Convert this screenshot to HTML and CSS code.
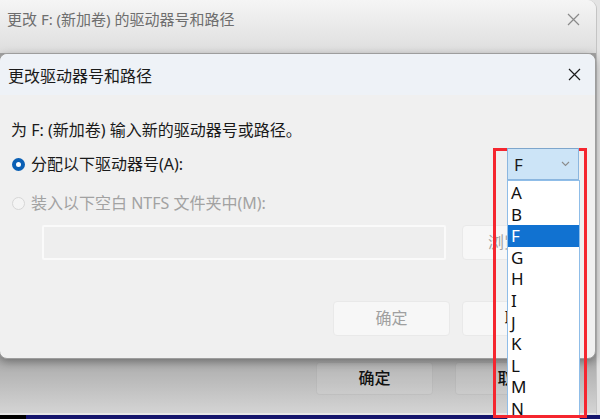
FILE: index.html
```html
<!DOCTYPE html>
<html lang="zh-CN">
  <head>
    <meta charset="UTF-8" />
    <meta name="viewport" content="width=device-width, initial-scale=1.0" />
    <title>更改驱动器号和路径</title>
    <link rel="stylesheet" href="styles.css">
  </head>
  <body>
    <div class="desk">
      <!-- window behind -->
      <div class="back-window">
        <div class="back-title">
          <span>更改 F: (新加卷) 的驱动器号和路径</span>
          <svg class="close-icon" width="13" height="13" viewBox="0 0 13 13">
            <path d="M1 1L12 12M12 1L1 12" stroke="#8a8a8a" stroke-width="1.2" fill="none" />
          </svg>
        </div>
        <div class="back-body">
          <div class="back-btn">确定</div>
          <div class="back-btn">取消</div>
        </div>
      </div>

      <!-- front dialog -->
      <div class="dialog">
        <div class="dialog-title">
          <span>更改驱动器号和路径</span>
          <svg class="close-icon" width="13" height="13" viewBox="0 0 13 13">
            <path d="M1 1L12 12M12 1L1 12" stroke="#1c1c1c" stroke-width="1.2" fill="none" />
          </svg>
        </div>
        <div class="dialog-body">
          <div class="prompt">为 F: (新加卷) 输入新的驱动器号或路径。</div>

          <div class="row row-letter">
            <label class="option">
              <span class="radio checked"></span>
              分配以下驱动器号(A):
            </label>
            <div class="combo">
              <div class="combo-face">
                <span>F</span>
                <svg width="9" height="6" viewBox="0 0 9 6">
                  <path d="M1 1L4.5 4.5L8 1" stroke="#8c8c8c" stroke-width="1.1" fill="none" />
                </svg>
              </div>
              <ul class="combo-list">
                <li>A</li>
                <li>B</li>
                <li class="selected">F</li>
                <li>G</li>
                <li>H</li>
                <li>I</li>
                <li>J</li>
                <li>K</li>
                <li>L</li>
                <li>M</li>
                <li>N</li>
              </ul>
              <div class="mark"></div>
            </div>
          </div>

          <div class="row row-folder">
            <label class="option disabled">
              <span class="radio"></span>
              装入以下空白 NTFS 文件夹中(M):
            </label>
          </div>

          <div class="row row-path">
            <div class="path-box"></div>
            <div class="btn muted">浏览(B)...</div>
          </div>

          <div class="row row-actions">
            <div class="btn muted">确定</div>
            <div class="btn">取消</div>
          </div>
        </div>
      </div>
    </div>
  </body>
</html>
```

FILE: styles.css
```css
* {
  box-sizing: border-box;
}
body {
  margin: 0;
  font-family: "Noto Sans", "Noto Sans CJK SC", sans-serif;
  color: #1a1a1a;
}
.desk {
  position: relative;
  width: 600px;
  height: 419px;
  overflow: hidden;
  background: linear-gradient(to bottom, #e4e4e4 415px, transparent 415px),
    linear-gradient(to right, #000 26px, #15156c 26px);
}

/* window behind */
.back-window {
  position: absolute;
  left: -3px;
  top: 0;
  width: 600px;
  height: 415px;
  display: flex;
  flex-direction: column;
  border-radius: 0 9px 0 0;
  border-right: 1px solid #c4c4c4;
  border-bottom: 2px solid #e6e6e6;
  overflow: hidden;
}
.back-title {
  height: 53px;
  padding: 8px 16px 0 10px;
  display: flex;
  justify-content: space-between;
  align-items: flex-start;
  background: linear-gradient(#f5f5f5, #dedede);
  color: #6e6e6e;
  font-size: 15px;
  line-height: 22px;
}
.back-title .close-icon {
  margin-top: 5px;
}
.back-body {
  flex: 1;
  display: flex;
  justify-content: flex-end;
  align-items: flex-end;
  gap: 22px;
  padding: 0 24px 18px 0;
  background: linear-gradient(#a6a6a6 300px, #d4d4d4);
}
.back-btn {
  width: 117px;
  height: 33px;
  border: 1px solid rgba(0, 0, 0, 0.06);
  border-radius: 4px;
  background: rgba(255, 255, 255, 0.1);
  font-size: 16px;
  font-weight: 500;
  line-height: 31px;
  text-align: center;
  color: #111;
}

/* front dialog */
.dialog {
  position: absolute;
  left: -1px;
  top: 53px;
  width: 597px;
  height: 306px;
  display: flex;
  flex-direction: column;
  background: #f0f0f0;
  border: 1px solid #9d9d9d;
  border-radius: 8px;
  box-shadow: 0 3px 10px rgba(0, 0, 0, 0.35);
}
.dialog-title {
  height: 41px;
  padding: 0 14px 0 8px;
  display: flex;
  justify-content: space-between;
  align-items: center;
  background: #eef2f7;
  border-radius: 8px 8px 0 0;
  font-size: 16px;
}
.dialog-body {
  padding: 24px 16px 0 11px;
  font-size: 16px;
}
.prompt {
  line-height: 22px;
}
.row {
  display: flex;
  align-items: center;
}
.row-letter {
  justify-content: space-between;
  margin-top: 7px;
}
.row-folder {
  margin-top: 12px;
}
.row-path {
  margin-top: 11px;
  gap: 16px;
}
.row-actions {
  margin-top: 41px;
  justify-content: flex-end;
  gap: 12px;
}
.option {
  display: flex;
  align-items: center;
  gap: 6px;
  line-height: 22px;
}
.option.disabled {
  color: #a2a2a2;
}
.radio {
  width: 13px;
  height: 13px;
  margin-left: 1px;
  border-radius: 50%;
  border: 1px solid #d6d6d6;
  background: #f4f4f4;
}
.radio.checked {
  border: 4px solid #0a5fb4;
  background: #fff;
}
.path-box {
  width: 404px;
  height: 35px;
  margin-left: 31px;
  background: #eeeeee;
  border: 2px solid #fafafa;
  border-radius: 2px;
}
.btn {
  width: 117px;
  height: 35px;
  border: 1px solid #e9e9e9;
  border-radius: 4px;
  background: #f7f7f7;
  font-size: 16px;
  line-height: 33px;
  text-align: center;
}
.btn.muted {
  color: #a0a0a0;
}

/* drop-down */
.combo {
  position: relative;
  width: 72px;
  height: 32px;
}
.combo-face {
  position: relative;
  z-index: 3;
  height: 32px;
  padding: 0 8px 0 6px;
  display: flex;
  justify-content: space-between;
  align-items: center;
  background: #cce4f7;
  border: 1px solid #8bb6df;
  border-top-color: #7ea6cc;
  font-size: 17px;
}
.combo-list {
  position: absolute;
  z-index: 1;
  left: 0;
  top: 32px;
  width: 73px;
  margin: 0;
  padding: 1px 0 0;
  list-style: none;
  background: #fff;
  border: 1px solid #8fbde8;
}
.combo-list li {
  height: 21.6px;
  padding-left: 3px;
  font-size: 17px;
  line-height: 21.6px;
  color: #111;
}
.combo-list li.selected {
  background: #1172d1;
  color: #fff;
}
.mark {
  position: absolute;
  z-index: 2;
  left: -14px;
  top: 0;
  width: 94px;
  height: 270px;
  border: 3px solid #f5262f;
}
```
